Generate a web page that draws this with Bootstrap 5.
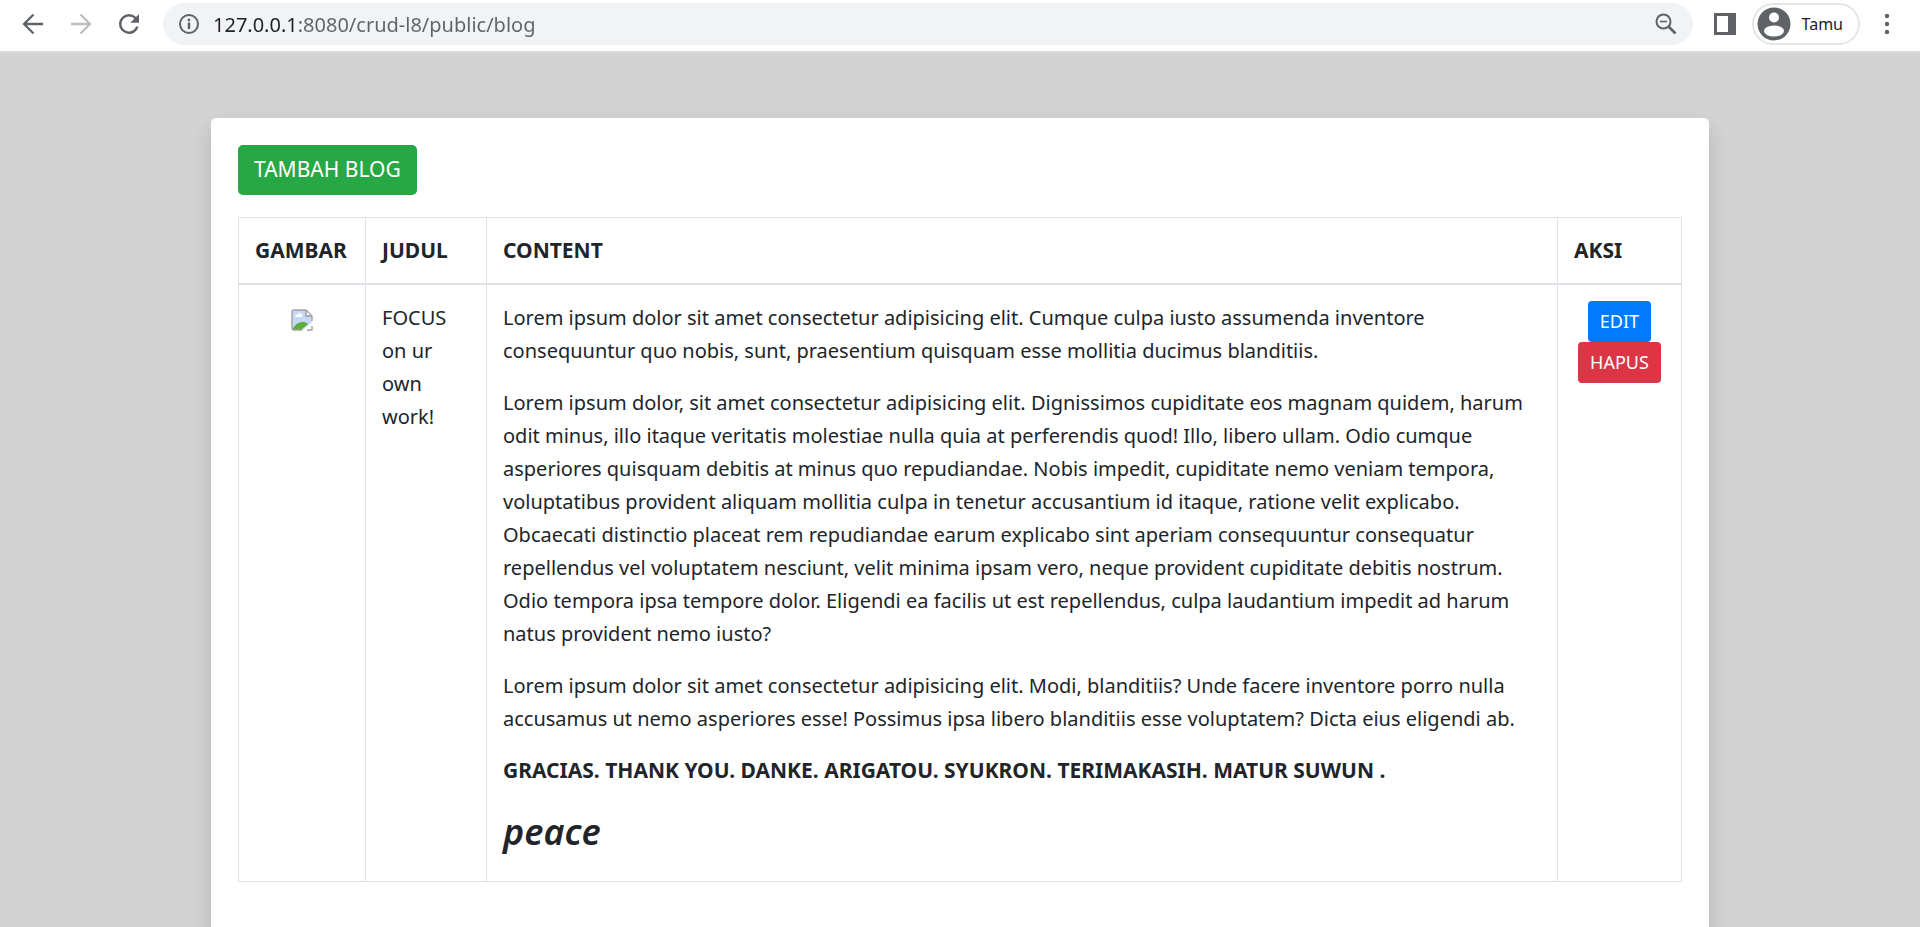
<!DOCTYPE html>
<html lang="id">
<head>
<meta charset="utf-8">
<meta name="viewport" content="width=device-width, initial-scale=1">
<title>Blog</title>
<link href="https://cdn.jsdelivr.net/npm/bootstrap@5.3.0/dist/css/bootstrap.min.css" rel="stylesheet">
<style>
  body { background: #d3d3d3; color: #212529; font: 20px/33px "Noto Sans", "Open Sans", sans-serif; }
  .browser-bar { height: 53px; padding: 3px 17px 6px; background: #fff; border-bottom: 2px solid #dadada; color: #5f6368; }
  .icon-btn { width: 32px; height: 32px; color: #5f6368; border: 0; background: none; padding: 0; display: flex; align-items: center; justify-content: center; flex: none; }
  .icon-btn:disabled { color: #babcbe; }
  .omnibox { height: 42px; margin-left: 18px; border-radius: 21px; background: #f1f3f4; padding: 0 11px; }
  .url-input { height: 42px; border: 0; outline: 0; padding: 0 0 0 5px; font-size: 20px; color: #5f6368; background: linear-gradient(to right, #202124 90px, #5f6368 90px); -webkit-background-clip: text; background-clip: text; -webkit-text-fill-color: transparent; }
  .profile-btn { height: 42px; margin: 0 11px; border: 2px solid #e3e5e6; border-radius: 21px; background: #fff; padding: 0 15px 0 3px; font-size: 16px; color: #202124; gap: 11px; }
  .blog-card { max-width: 1498px; margin: 65px auto 0; padding: 27px; border: 0; border-radius: 5px; box-shadow: 0 11px 22px rgba(0,0,0,.15); }
  .btn-add { height: 50px; padding: 0 16px; font-size: 21px; border: 0; border-radius: 5px; background: #28a745; }
  .btn-row { display: inline-block; height: 41px; padding: 0 12px; font-size: 18px; line-height: 41px; border: 0; border-radius: 4px; vertical-align: top; }
  .btn-edit { background: #007bff; }
  .btn-hapus { background: #dc3545; }
  .blog-table { table-layout: fixed; color: #212529; border-color: #dee2e6; margin: 22px 0; }
  .blog-table th, .blog-table td { padding: 16px; color: #212529; border-color: #dee2e6; }
  .blog-table th, .blog-table strong { font-size: 21px; }
  .blog-table thead th { border-bottom-width: 2px; }
  .blog-table p { margin: 0 0 19px; }
  .blog-table h3 { font-size: 36px; line-height: 45px; font-weight: 600; margin: 22px 0 11px; }
  .w-gambar { width: 127px; } .w-judul { width: 121px; } .w-aksi { width: 124px; }
</style>
</head>
<body class="d-flex flex-column vh-100 overflow-hidden">
<header class="browser-bar d-flex align-items-center flex-shrink-0">
  <button class="icon-btn" type="button" aria-label="Back"><svg width="22" height="22" viewBox="0 0 22 22" fill="none" stroke="currentColor" stroke-width="2.3"><path d="M21 11H3M11.500 1.500 2 11l9.500 9.500"/></svg></button>
  <button class="icon-btn ms-3" type="button" aria-label="Forward" disabled><svg width="22" height="22" viewBox="0 0 22 22" fill="none" stroke="currentColor" stroke-width="2.3"><path d="M1 11h18M10.500 1.500 20 11l-9.500 9.500"/></svg></button>
  <button class="icon-btn ms-3" type="button" aria-label="Reload"><svg width="30" height="30" viewBox="0 0 24 24" fill="currentColor"><path d="M17.650 6.350A7.950 7.950 0 0 0 12 4a8 8 0 1 0 7.730 10h-2.080A6 6 0 1 1 12 6c1.660 0 3.140.690 4.220 1.780L13 11h7V4z"/></svg></button>
  <div class="omnibox d-flex align-items-center flex-grow-1">
    <svg class="flex-shrink-0 ms-1" width="22" height="22" viewBox="0 0 22 22" fill="none" stroke="currentColor" stroke-width="2"><circle cx="11" cy="11" r="9"/><path d="M11 9.500v6.500M11 5.800v2.400" stroke-width="2.400"/></svg>
    <input class="url-input flex-grow-1 ms-2" type="text" aria-label="Address" value="127.0.0.1:8080/crud-l8/public/blog">
    <button class="icon-btn" type="button" aria-label="Zoom"><svg width="22" height="22" viewBox="0 0 22 22" fill="none" stroke="currentColor"><circle cx="8.500" cy="8.500" r="7" stroke-width="2"/><path d="M5 8.500h7" stroke-width="1.600"/><path d="m13.500 13.500 7 7" stroke-width="2.600"/></svg></button>
  </div>
  <button class="icon-btn ms-3" type="button" aria-label="Side panel"><svg width="22" height="22" viewBox="0 0 22 22"><path fill="currentColor" fill-rule="evenodd" d="M0 0h22v22H0zM3 3v16h11V3z"/></svg></button>
  <button class="profile-btn d-flex align-items-center" type="button"><svg width="34" height="34" viewBox="0 0 34 34"><circle cx="17" cy="17" r="16.500" fill="#5f6368"/><circle cx="17" cy="10.500" r="5" fill="#fff"/><ellipse cx="17" cy="24" rx="10" ry="5.500" fill="#fff"/></svg>Tamu</button>
  <button class="icon-btn" type="button" aria-label="Menu"><svg width="6" height="22" viewBox="0 0 6 22" fill="currentColor"><circle cx="3" cy="3" r="2.200"/><circle cx="3" cy="11" r="2.200"/><circle cx="3" cy="19" r="2.200"/></svg></button>
</header>
<main class="flex-grow-1">
  <div class="blog-card card">
    <div class="d-flex"><button class="btn btn-success btn-add" type="button">TAMBAH BLOG</button></div>
    <table class="table table-bordered blog-table">
      <colgroup><col class="w-gambar"><col class="w-judul"><col><col class="w-aksi"></colgroup>
      <thead><tr><th scope="col">GAMBAR</th><th scope="col">JUDUL</th><th scope="col">CONTENT</th><th scope="col">AKSI</th></tr></thead>
      <tbody><tr>
        <td class="text-center"><svg width="22" height="22" viewBox="0 0 22 22" role="img" aria-label="Gambar"><path d="M1 3a2 2 0 0 1 2-2h12l6 6v6L12 21H3a2 2 0 0 1-2-2z" fill="#c6d8f7"/><path d="M4 8a2 2 0 0 1 2-2 2.500 2.500 0 0 1 5 2z" fill="#fff"/><path d="M2 20c2-5 6-7 10-7 2 0 4 1 5 2l-7 6H2z" fill="#5aad36"/><path d="M15 1v6h6" fill="#fff" stroke="#999" stroke-width="1.400"/><path d="M21 12V7l-6-6H3a2 2 0 0 0-2 2v16a2 2 0 0 0 2 2h8M16 21h5v-4" fill="none" stroke="#a3a3a3" stroke-width="1.400"/></svg></td>
        <td>FOCUS on ur own work!</td>
        <td>
          <p>Lorem ipsum dolor sit amet consectetur adipisicing elit. Cumque culpa iusto assumenda inventore consequuntur quo nobis, sunt, praesentium quisquam esse mollitia ducimus blanditiis.</p>
          <p>Lorem ipsum dolor, sit amet consectetur adipisicing elit. Dignissimos cupiditate eos magnam quidem, harum odit minus, illo itaque veritatis molestiae nulla quia at perferendis quod! Illo, libero ullam. Odio cumque asperiores quisquam debitis at minus quo repudiandae. Nobis impedit, cupiditate nemo veniam tempora, voluptatibus provident aliquam mollitia culpa in tenetur accusantium id itaque, ratione velit explicabo. Obcaecati distinctio placeat rem repudiandae earum explicabo sint aperiam consequuntur consequatur repellendus vel voluptatem nesciunt, velit minima ipsam vero, neque provident cupiditate debitis nostrum. Odio tempora ipsa tempore dolor. Eligendi ea facilis ut est repellendus, culpa laudantium impedit ad harum natus provident nemo iusto?</p>
          <p>Lorem ipsum dolor sit amet consectetur adipisicing elit. Modi, blanditiis? Unde facere inventore porro nulla accusamus ut nemo asperiores esse! Possimus ipsa libero blanditiis esse voluptatem? Dicta eius eligendi ab.</p>
          <p><strong>GRACIAS. THANK YOU. DANKE. ARIGATOU. SYUKRON. TERIMAKASIH. MATUR SUWUN .</strong></p>
          <h3><em>peace</em></h3>
        </td>
        <td class="text-center"><a class="btn btn-primary btn-row btn-edit" href="#">EDIT</a> <button class="btn btn-danger btn-row btn-hapus" type="button">HAPUS</button></td>
      </tr></tbody>
    </table>
  </div>
</main>
<script src="https://cdn.jsdelivr.net/npm/bootstrap@5.3.0/dist/js/bootstrap.bundle.min.js"></script>
</body>
</html>
